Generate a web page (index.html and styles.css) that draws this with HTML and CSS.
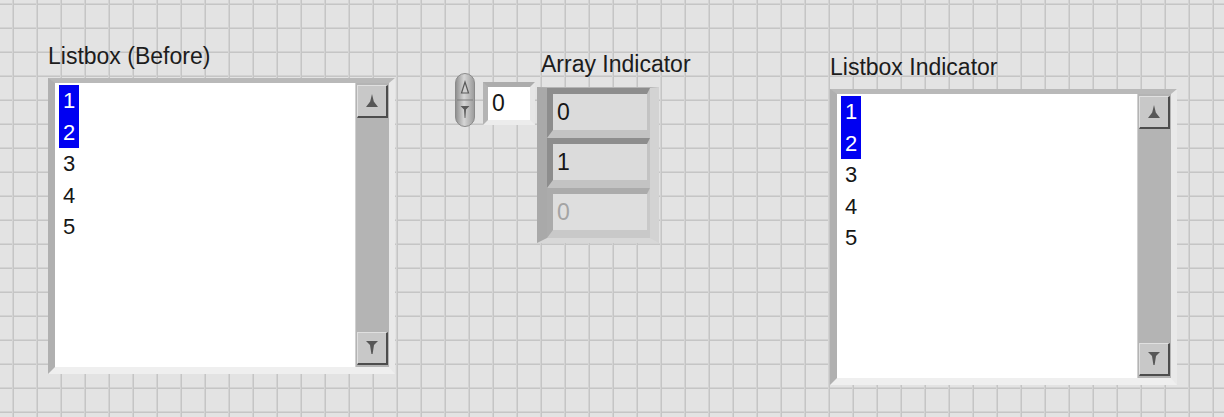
FILE: index.html
```html
<!DOCTYPE html>
<html lang="en">
<head>
    <meta charset="UTF-8">
    <meta name="viewport" content="width=device-width, initial-scale=1.0">
    <title>Front Panel</title>
    <link rel="stylesheet" href="styles.css">
</head>
<body>
    <div class="panel">
        <!-- left listbox -->
        <div class="listbox listbox-before">
            <div class="label">Listbox (Before)</div>
            <div class="lb-frame">
                <ul class="lb-items">
                    <li><span class="sel">1</span></li>
                    <li><span class="sel">2</span></li>
                    <li><span>3</span></li>
                    <li><span>4</span></li>
                    <li><span>5</span></li>
                </ul>
                <div class="scrollbar">
                    <div class="sb-btn">
                        <svg width="12" height="14" viewBox="0 0 12 14"><path d="M6 0 L7.8 7.5 L12 13 H0 L4.2 7.5 Z" fill="#575757"/></svg>
                    </div>
                    <div class="sb-btn">
                        <svg width="12" height="14" viewBox="0 0 12 14"><path d="M0 0 H12 L8 4 L6.6 13 H5.4 L4 4 Z" fill="#575757"/></svg>
                    </div>
                </div>
            </div>
        </div>

        <!-- index + array indicator -->
        <div class="array-group">
            <div class="index">
                <div class="spinner">
                    <svg width="20" height="54" viewBox="0 0 20 54">
                        <defs>
                            <linearGradient id="spin" x1="0" x2="1" y1="0" y2="0">
                                <stop offset="0" stop-color="#8c8c8c"/>
                                <stop offset="0.45" stop-color="#d6d6d6"/>
                                <stop offset="1" stop-color="#999"/>
                            </linearGradient>
                        </defs>
                        <rect x="0.5" y="0.5" width="19" height="53" rx="9.5" fill="url(#spin)" stroke="#8a8a8a"/>
                        <path d="M2 27 H18" stroke="#7c7c7c" stroke-width="1"/>
                        <path d="M10 9 L13.5 20 H6.5 Z" fill="#cfcfcf" stroke="#5a5a5a" stroke-width="1.2"/>
                        <path d="M5.5 33 H14.5 L11 36.5 L10.4 45 H9.6 L9 36.5 Z" fill="#5a5a5a"/>
                    </svg>
                </div>
                <div class="index-box">0</div>
            </div>
            <div class="array">
                <div class="label">Array Indicator</div>
                <div class="array-frame">
                    <div class="cell">0</div>
                    <div class="cell">1</div>
                    <div class="cell empty">0</div>
                </div>
            </div>
        </div>

        <!-- right listbox -->
        <div class="listbox listbox-indicator">
            <div class="label">Listbox Indicator</div>
            <div class="lb-frame">
                <ul class="lb-items">
                    <li><span class="sel">1</span></li>
                    <li><span class="sel">2</span></li>
                    <li><span>3</span></li>
                    <li><span>4</span></li>
                    <li><span>5</span></li>
                </ul>
                <div class="scrollbar">
                    <div class="sb-btn">
                        <svg width="12" height="14" viewBox="0 0 12 14"><path d="M6 0 L7.8 7.5 L12 13 H0 L4.2 7.5 Z" fill="#575757"/></svg>
                    </div>
                    <div class="sb-btn">
                        <svg width="12" height="14" viewBox="0 0 12 14"><path d="M0 0 H12 L8 4 L6.6 13 H5.4 L4 4 Z" fill="#575757"/></svg>
                    </div>
                </div>
            </div>
        </div>
    </div>
</body>
</html>
```

FILE: styles.css
```css
* {
    margin: 0;
    padding: 0;
    box-sizing: border-box;
}

body {
    width: 1224px;
    height: 417px;
    overflow: hidden;
    font-family: "Liberation Sans", Arial, sans-serif;
    color: #161616;
    background-color: #e3e3e3;
    /* panel grid, 24px */
    background-image:
        linear-gradient(to right, transparent 12px, #d3d3d3 12px, #d3d3d3 13px, #c5c5c5 13px, #c5c5c5 14px, transparent 14px),
        linear-gradient(to bottom, transparent 3px, #d3d3d3 3px, #d3d3d3 4px, #c5c5c5 4px, #c5c5c5 5px, transparent 5px);
    background-size: 24px 24px;
}

.panel {
    display: flex;
    align-items: flex-start;
}

.label {
    font-size: 23px;
    line-height: 26px;
    white-space: nowrap;
    color: #1c1c1c;
}

/* listboxes */
.listbox-before {
    margin: 43px 0 0 48px;
}

.listbox-indicator {
    margin: 54px 0 0 171px;
}

.lb-frame {
    margin-top: 9px;
    display: flex;
    border-style: solid;
    border-width: 5px 6px 7px 7px;
    border-color: #b9b9b9 #e9e9e9 #efefef #b0b0b0;
}

.lb-items {
    width: 300px;
    height: 284px;
    background-color: #fff;
    list-style: none;
    padding: 2px 0 0 4px;
    font-size: 22px;
}

.lb-items li {
    height: 31.5px;
    line-height: 31.5px;
}

.lb-items span {
    display: inline-block;
    height: 100%;
    padding: 0 4px;
}

.lb-items .sel {
    background-color: #0000f2;
    color: #fff;
}

.scrollbar {
    width: 34px;
    display: flex;
    flex-direction: column;
    justify-content: space-between;
    padding: 2px 1px;
    background-color: #b4b4b4;
    border-left: 1px solid #d0d0d0;
}

.sb-btn {
    height: 33px;
    display: flex;
    align-items: center;
    justify-content: center;
    background-color: #c8c8c8;
    border-style: solid;
    border-width: 1px 2px 2px 1px;
    border-color: #e0e0e0 #4d4d4d #4d4d4d #e0e0e0;
}

/* index + array */
.array-group {
    display: flex;
    align-items: flex-start;
    margin: 51px 0 0 60px;
}

.index {
    display: flex;
    align-items: flex-start;
    margin-top: 22px;
}

.spinner {
    width: 20px;
    height: 54px;
}

.spinner svg {
    display: block;
}

.index-box {
    width: 52px;
    height: 43px;
    margin: 9px 0 0 8px;
    padding-left: 4px;
    background-color: #fff;
    border-style: solid;
    border-width: 5px;
    border-color: #acacac #e6e6e6 #ececec #b4b4b4;
    font-size: 23px;
    line-height: 33px;
}

.array {
    width: 122px;
    margin-left: 2px;
}

.array .label {
    padding-left: 4px;
}

.array-frame {
    margin-top: 10px;
    border-style: solid;
    border-width: 1px 9px 5px 10px;
    border-color: #b5b5b5 #d3d3d3 #d8d8d8 #a9a9a9;
}

.cell {
    height: 50px;
    padding-left: 4px;
    background-color: #dbdbdb;
    border-style: solid;
    border-width: 6px 3px 8px 6px;
    border-color: #8d8d8d #c3c3c3 #c3c3c3 #8d8d8d;
    font-size: 23px;
    line-height: 36px;
}

.cell.empty {
    background-color: #dedede;
    border-color: #ababab #c9c9c9 #c9c9c9 #ababab;
    color: #a4a4a4;
}
```
